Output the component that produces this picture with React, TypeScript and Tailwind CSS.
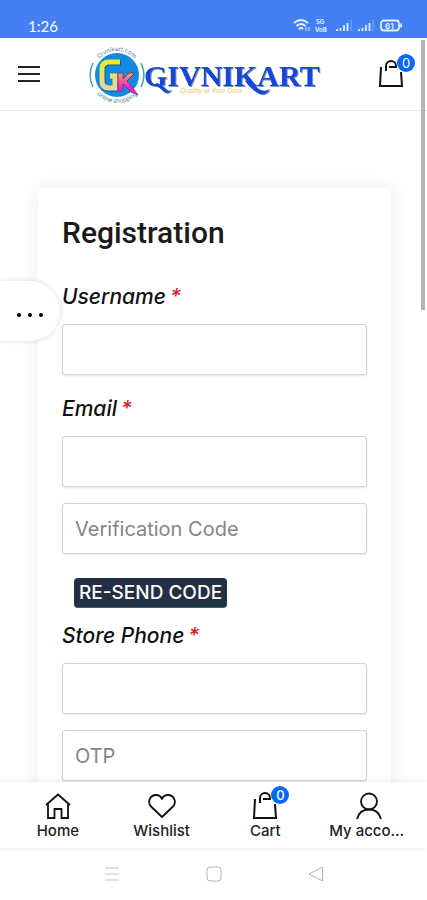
import React, { useState } from 'react';

const BagIcon = () => (
    <svg className="w-8 h-8" viewBox="0 0 32 32" fill="none" stroke="#111" strokeWidth="2">
        <path d="M6 9 L5 28 H27 L26 14 M14 9 H20" />
        <path d="M11 13 V8 a5 5 0 0 1 10 0 V10" />
    </svg>
);

const HomeIcon = () => (
    <svg className="w-7 h-7" viewBox="0 0 28 28" fill="none" stroke="#111" strokeWidth="1.8">
        <path d="M2 13 L14 2.500 L26 13 M4 11.500 V26 H10.500 V17 H17.500 V26 H24 V11.500" />
    </svg>
);

const HeartIcon = () => (
    <svg className="w-7 h-7" viewBox="0 0 28 28" fill="none" stroke="#111" strokeWidth="1.8" strokeLinejoin="round">
        <path d="M14 25 L3 14.500 C-1 10 2 3 8 3 C11 3 13 4.500 14 7 C15 4.500 17 3 20 3 C26 3 29 10 25 14.500 Z" />
    </svg>
);

const UserIcon = () => (
    <svg className="w-7 h-7" viewBox="0 0 28 28" fill="none" stroke="#111" strokeWidth="1.8">
        <circle cx="14" cy="9.500" r="8" />
        <path d="M2 27 C3.500 21 8 17.500 14 17.500 S24.500 21 26 27" />
    </svg>
);

const CartIcon = ({ count }: { count: number }) => (
    <span className="relative block">
        <BagIcon />
        <span className="absolute -top-1 -right-2 w-[18px] h-[18px] rounded-full bg-[#0969f5] text-white text-[13px] leading-[18px] text-center">{count}</span>
    </span>
);

const StatusBar = () => (
    <div className="h-[38px] shrink-0 bg-[#4480f4] flex items-end justify-between pl-7 pr-6 pb-0.5 text-white">
        <span className="text-[15px] leading-5 font-['Lato']">1:26</span>
        <svg className="w-[110px] h-4 mb-0.5" viewBox="0 0 110 16" fill="none" stroke="#e3edff" strokeWidth="1.8">
            <path d="M1 5 Q8 -1 15 5 M3.500 8 Q8 4 12.500 8 M6 11 Q8 9 10 11" />
            <path d="M13 9 V13 M16 9 V13" strokeWidth="1" />
            <text x="23" y="6" fontSize="6" fontWeight="bold" fill="#e3edff" stroke="none">5G</text>
            <text x="22" y="14" fontSize="6" fontWeight="bold" fill="#e3edff" stroke="none">VoB</text>
            <path d="M44 13 V11 M47.500 13 V10 M51 13 V7 M54.500 13 V5 M66 13 V11 M69.500 13 V10 M73 13 V7 M76.500 13 V5" />
            <path d="M58 13 V2 M80 13 V2" stroke="#7da6f7" strokeWidth="1" />
            <rect x="88" y="2.500" width="18" height="10" rx="3" />
            <path d="M108 5.500 V9.500" />
            <text x="92" y="10.500" fontSize="8" fontWeight="bold" fill="#e3edff" stroke="none">61</text>
        </svg>
    </div>
);

const Logo = () => (
    <svg className="w-[236px] h-[60px] overflow-visible" viewBox="2 0 236 60" role="img" aria-label="Givnikart">
        <defs>
            <linearGradient id="gFill" x1="0" y1="0" x2="0" y2="1">
                <stop offset="0" stopColor="#e8ee2c" />
                <stop offset="1" stopColor="#e9d6a0" />
            </linearGradient>
            <linearGradient id="kFill" x1="0" y1="0" x2="0" y2="1">
                <stop offset="0" stopColor="#f0a060" />
                <stop offset="0.7" stopColor="#fb18d0" />
            </linearGradient>
            <path id="topArc" d="M4 31 A24 24 0 0 1 52 31" />
            <path id="bottomArc" d="M0 31 A28 28 0 0 0 56 31" />
        </defs>
        <circle cx="28" cy="31" r="22" fill="#118be0" />
        <path d="M4 19 A27 27 0 0 0 4 43 M52 19 A27 27 0 0 1 52 43" fill="none" stroke="#4b9dad" strokeWidth="1.500" />
        <text fontSize="6" fill="#4e8793" textAnchor="middle">
            <textPath href="#topArc" startOffset="50%">Givnikart.com</textPath>
        </text>
        <text fontSize="6" fill="#4e8793" textAnchor="middle">
            <textPath href="#bottomArc" startOffset="50%">online shopping</textPath>
        </text>
        <path d="M32 19 H21 Q14 19 14 26 V38 Q14 45 21 45 H27 V33 H23" fill="none" stroke="#1c5b86" strokeWidth="5" />
        <path d="M31 18 H20 Q13 18 13 25 V37 Q13 44 20 44 H26 V32 H21" fill="none" stroke="url(#gFill)" strokeWidth="5" />
        <path d="M29 29 H34 V35 L40 29 H46 L38 37 L49 51 L42 48 L34 40 V47 H29 Z" fill="url(#kFill)" stroke="#7a3d78" strokeWidth="1" />
        <text x="91" y="49" fontSize="7" fill="#edc778" className="font-['Liberation_Sans',sans-serif]">Quality at Your Door</text>
        <g className="drop-shadow-[1px_1px_0_#8592ac]" fill="#1548d8">
            <text x="55" y="42" fontSize="30" fontWeight="bold" className="font-['Liberation_Serif',serif]">GIVNIKART</text>
            <path d="M68 39 Q75 42 77 45 Q79 48 83 46 Q78 52 73 46 Q71 43 64 41 Z M160 35 Q167 44 172 46 Q176 48 181 45 Q176 53 169 49 Q163 46 156 37 Z" />
        </g>
    </svg>
);

const inputStyle = "block w-full h-[51px] px-3 bg-white border border-[#d3d3d3] rounded-[3px] shadow-[0_1px_2px_#0000001a] text-xl text-gray-800 placeholder:text-[#858585]";

const Label = ({ id, text }: { id: string; text: string }) => (
    <label htmlFor={id} className="block text-[21px] leading-7 italic font-medium text-[#111]">
        {text}<span className="ml-1 text-[#e0202c]">*</span>
    </label>
);

const navItems = [
    { label: 'Home', icon: <HomeIcon /> },
    { label: 'Wishlist', icon: <HeartIcon /> },
    { label: 'Cart', icon: <CartIcon count={0} /> },
    { label: 'My account', icon: <UserIcon /> },
];

const App = () => {
    const [form, setForm] = useState({ username: '', email: '', code: '', phone: '', otp: '' });

    const handleChange = (e: React.ChangeEvent<HTMLInputElement>) => {
        setForm({ ...form, [e.target.name]: e.target.value });
    };

    return (
        <div className="relative h-screen flex flex-col overflow-hidden bg-white font-['Inter',sans-serif]">
            <StatusBar />

            <header className="h-[73px] shrink-0 flex items-center justify-between pl-4 pr-5 border-b border-[#e8e8e8]">
                <button aria-label="Menu">
                    <svg className="w-[26px] h-6" viewBox="0 0 26 24" stroke="#222" strokeWidth="2">
                        <path d="M2 5 H24 M2 12 H24 M2 19 H24" />
                    </svg>
                </button>
                <a href="#home"><Logo /></a>
                <button aria-label="Cart"><CartIcon count={0} /></button>
            </header>

            <main className="flex-1 min-h-0 overflow-y-auto [scrollbar-width:none] pl-[38px] pr-9 pt-[77px]">
                <form className="px-6 pt-[25px] pb-8 rounded-md bg-white shadow-[0_0_20px_#00000014]" onSubmit={(e) => e.preventDefault()}>
                    <h1 className="mb-[30px] text-[30px] leading-10 font-medium font-['Roboto',sans-serif] text-[#1a1a1a]">Registration</h1>

                    <Label id="username" text="Username" />
                    <input id="username" name="username" value={form.username} onChange={handleChange} className={`${inputStyle} mt-[13px] mb-5`} />

                    <Label id="email" text="Email" />
                    <input id="email" name="email" type="email" value={form.email} onChange={handleChange} className={`${inputStyle} mt-[13px] mb-4`} />
                    <input name="code" aria-label="Verification Code" placeholder="Verification Code" value={form.code} onChange={handleChange} className={inputStyle} />

                    <button type="button" className="block mt-6 mb-3.5 ml-3 h-[30px] px-[5px] rounded bg-[#232f42] border-b border-[#2b6876] text-white text-[19px] leading-7 font-medium">RE-SEND CODE</button>

                    <Label id="phone" text="Store Phone" />
                    <input id="phone" name="phone" type="tel" value={form.phone} onChange={handleChange} className={`${inputStyle} mt-[13px] mb-4`} />
                    <input name="otp" aria-label="OTP" placeholder="OTP" value={form.otp} onChange={handleChange} className={inputStyle} />
                </form>
            </main>

            <nav className="h-[66px] shrink-0 relative grid grid-cols-4 px-1.5 bg-white shadow-[0_0_6px_#0000001a]">
                {navItems.map((item) => (
                    <a key={item.label} href="#" className="min-w-0 px-3 flex flex-col items-center pt-[9px] text-[15px] leading-5 font-medium text-[#222]">
                        <span className="h-[30px] flex items-center">{item.icon}</span>
                        <span className="max-w-full truncate">{item.label}</span>
                    </a>
                ))}
            </nav>

            {/* Android system buttons */}
            <div className="h-[52px] shrink-0 flex items-center justify-center gap-[86px] bg-white">
                <button aria-label="Recent apps">
                    <svg className="w-4 h-4" viewBox="0 0 16 16" stroke="#c4c4c4"><path d="M1 2 H15 M1 8 H15 M1 14 H15" /></svg>
                </button>
                <button aria-label="Home screen">
                    <svg className="w-4 h-4" viewBox="0 0 16 16" fill="none" stroke="#b5b5b5"><rect x="1" y="1" width="14" height="14" rx="3" /></svg>
                </button>
                <button aria-label="Back">
                    <svg className="w-4 h-4" viewBox="0 0 16 16" fill="none" stroke="#b5b5b5" strokeLinejoin="round"><path d="M14.500 1 V15 L1 8 Z" /></svg>
                </button>
            </div>

            {/* Side handle and scroll thumb float over the page */}
            <button aria-label="More" className="absolute left-0 top-[281px] w-[60px] h-[60px] pt-2 flex items-center justify-center gap-[7px] rounded-r-full bg-white shadow-[0_0_5px_#00000026]">
                <span className="w-1 h-1 rounded-full bg-black" />
                <span className="w-1 h-1 rounded-full bg-black" />
                <span className="w-1 h-1 rounded-full bg-black" />
            </button>
            <div className="absolute right-0.5 top-10 w-1 h-[270px] bg-[#b4b4b4]" />
        </div>
    );
};

export default App;
